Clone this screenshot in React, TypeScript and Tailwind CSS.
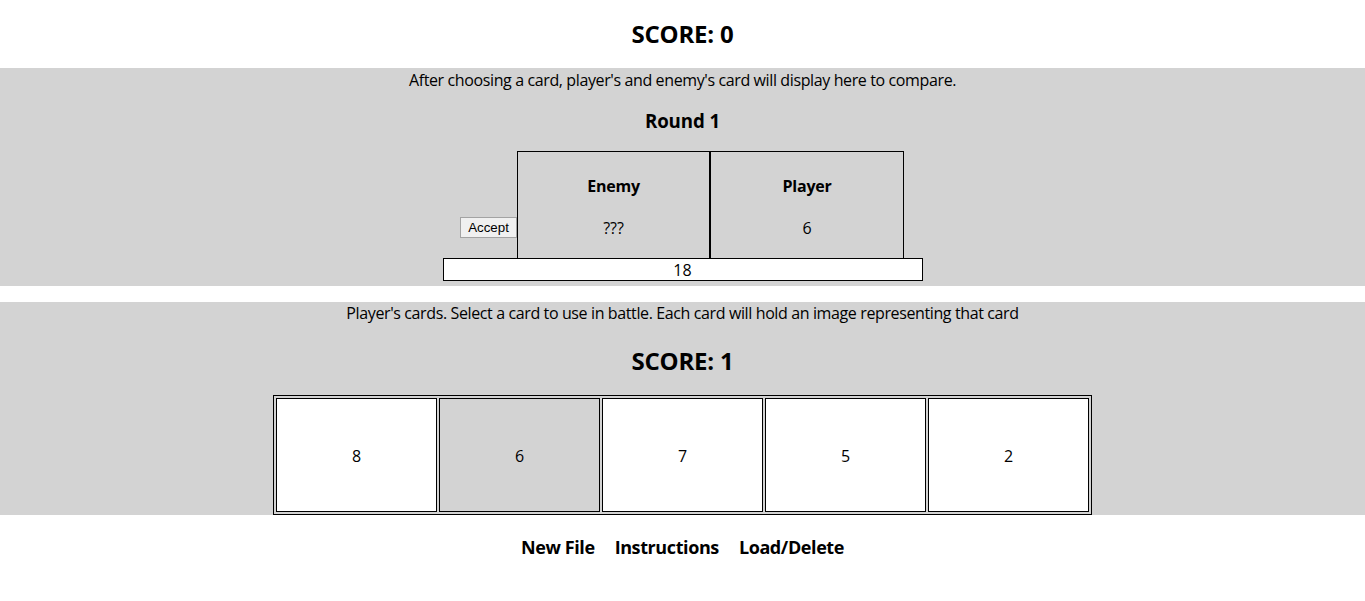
import React from "react";

const font = { fontFamily: '"Open Sans", "Noto Sans", sans-serif' };

export default function App() {
  const cards = [8, 6, 7, 5, 2];
  const selected = 1;
  return (
    <div className="w-[1365px] h-[601px] bg-white text-black" style={font}>
      <div className="h-[68px] flex items-center justify-center">
        <h2 className="text-[24px] font-bold leading-[32px] tracking-[-0.2px]">SCORE: 0</h2>
      </div>

      <div className="bg-[#d3d3d3] flex flex-col items-center pb-[5px]">
        <p className="text-[16px] leading-[22px] tracking-[-0.38px] pt-[1px]">
          After choosing a card, player's and enemy's card will display here to compare.
        </p>
        <h3 className="mt-[18px] text-[18.72px] font-bold leading-[24px] tracking-[-0.1px]">Round 1</h3>
        <div className="mt-[18px] flex items-end pr-[1px]">
          <button
            className="mb-[20px] h-[21px] w-[57px] border border-[#a3a3a3] bg-[#f0f0f0] text-[13.33px] leading-[19px] text-black"
            style={{ fontFamily: '"Liberation Sans", Arial, sans-serif' }}
          >
            Accept
          </button>
          <div className="w-[193px] h-[107px] border-t border-l border-r border-black flex flex-col items-center">
            <div className="mt-[22px] text-[16px] font-bold leading-[24px] tracking-[-0.2px]">Enemy</div>
            <div className="mt-[18px] text-[16px] leading-[24px]">???</div>
          </div>
          <div className="w-[194px] h-[107px] border-t border-l border-r border-black flex flex-col items-center">
            <div className="mt-[22px] text-[16px] font-bold leading-[24px] tracking-[-0.2px]">Player</div>
            <div className="mt-[18px] text-[16px] leading-[24px]">6</div>
          </div>
        </div>
        <div className="w-[480px] h-[23px] border border-black bg-white flex items-center justify-center text-[16px] leading-[21px] pt-[2px]">
          18
        </div>
      </div>

      <div className="h-[16px]" />

      <div className="bg-[#d3d3d3] flex flex-col items-center">
        <p className="text-[16px] leading-[22px] tracking-[-0.38px]">
          Player's cards. Select a card to use in battle. Each card will hold an image representing that card
        </p>
        <h2 className="mt-[21px] text-[24px] font-bold leading-[32px] tracking-[-0.2px]">SCORE: 1</h2>
        <div className="mt-[18px] border border-black p-[2px] flex gap-[2px]">
          {cards.map((c, i) => (
            <div
              key={i}
              className={`w-[161px] h-[114px] border border-black flex items-center justify-center text-[16px] pt-[2px] ${
                i === selected ? "bg-[#d3d3d3]" : "bg-white"
              }`}
            >
              {c}
            </div>
          ))}
        </div>
      </div>

      <div className="mt-[20px] flex justify-center gap-[20px] text-[18px] font-bold leading-[24px] tracking-[-0.4px]">
        <span>New File</span>
        <span>Instructions</span>
        <span>Load/Delete</span>
      </div>
    </div>
  );
}
